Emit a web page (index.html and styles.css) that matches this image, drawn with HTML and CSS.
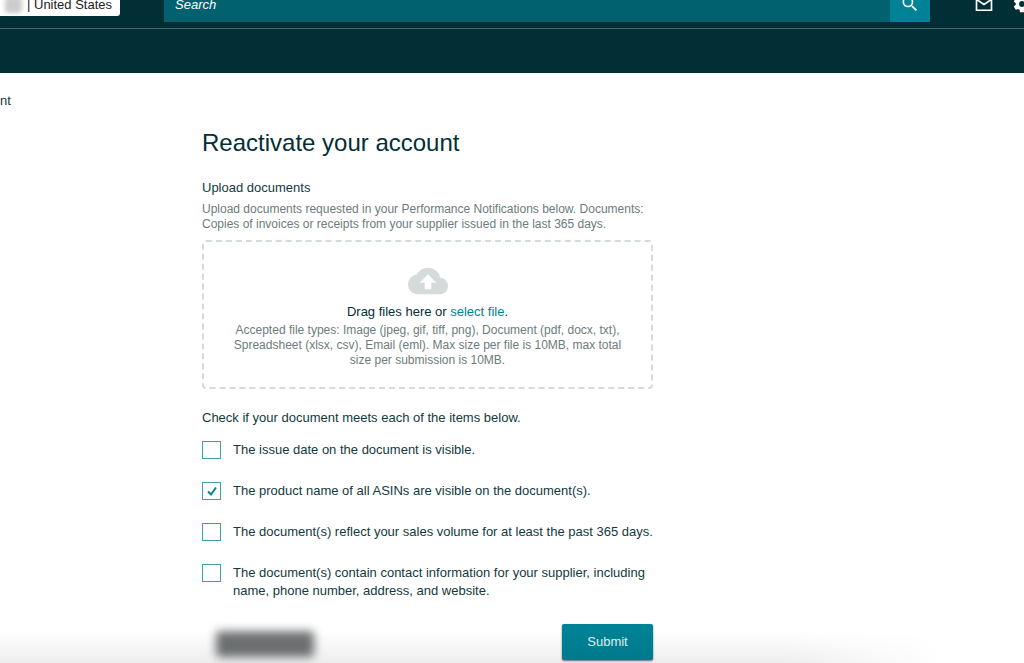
FILE: index.html
```html
<!DOCTYPE html>
<html lang="en">
<head>
<meta charset="utf-8">
<meta name="viewport" content="width=device-width, initial-scale=1">
<title>Reactivate your account</title>
<link rel="stylesheet" href="styles.css">
</head>
<body>
<header class="header">
  <div class="topbar">
    <button class="store" type="button"><span class="store-name"></span><span>| United States</span></button>
    <form class="search" role="search">
      <input class="search-input" type="search" placeholder="Search" aria-label="Search">
      <button class="search-button" type="button" aria-label="Run search">
        <svg width="20" height="20" viewBox="0 0 24 24" fill="currentColor"><path d="M15.5 14h-.79l-.28-.27A6.47 6.47 0 0 0 16 9.500 6.500 6.500 0 1 0 9.500 16c1.610 0 3.090-.59 4.230-1.570l.27.28v.79l5 4.990L20.490 19zm-6 0a4.500 4.500 0 1 1 0-9 4.500 4.500 0 0 1 0 9z"/></svg>
      </button>
    </form>
    <nav class="tools" aria-label="Tools">
      <button class="tool" type="button" aria-label="Messages">
        <svg width="20" height="20" viewBox="0 0 24 24" fill="none" stroke="currentColor" stroke-width="2"><path d="M3 5h18v14.500H3zM3 6.500l9 6 9-6"/></svg>
      </button>
      <button class="tool" type="button" aria-label="Settings">
        <svg width="20" height="20" viewBox="0 0 24 24" fill="currentColor"><path d="M19.430 12.980c.04-.32.07-.64.07-.98s-.03-.66-.07-.98l2.110-1.650c.19-.15.24-.42.12-.64l-2-3.460c-.12-.22-.39-.3-.61-.22l-2.490 1c-.52-.4-1.080-.73-1.690-.98l-.38-2.650A.49.49 0 0 0 14 2h-4c-.25 0-.46.18-.49.42l-.38 2.650c-.61.25-1.170.59-1.690.98l-2.490-1c-.23-.09-.49 0-.61.22l-2 3.460c-.13.22-.07.49.12.64l2.110 1.650c-.04.32-.07.65-.07.98s.03.66.07.98l-2.110 1.650c-.19.15-.24.42-.12.64l2 3.460c.12.22.39.3.61.22l2.490-1c.52.4 1.080.73 1.690.98l.38 2.650c.03.24.24.42.49.42h4c.25 0 .46-.18.49-.42l.38-2.650c.61-.25 1.170-.59 1.690-.98l2.490 1c.23.09.49 0 .61-.22l2-3.460c.12-.22.07-.49-.12-.64zM12 15.500a3.500 3.500 0 1 1 0-7 3.500 3.500 0 0 1 0 7z"/></svg>
      </button>
    </nav>
  </div>
  <div class="menubar"></div>
</header>
<div class="crumb">nt</div>
<main class="main">
  <h1 class="title">Reactivate your account</h1>
  <h2 class="subtitle">Upload documents</h2>
  <p class="hint">Upload documents requested in your Performance Notifications below. Documents: Copies of invoices or receipts from your supplier issued in the last 365 days.</p>
  <section class="dropzone">
    <svg class="cloud" width="40" height="40" viewBox="0 0 24 24" fill="currentColor"><path d="M19.350 10.040A7.490 7.490 0 0 0 12 4C9.110 4 6.600 5.640 5.350 8.040A5.994 5.994 0 0 0 0 14c0 3.310 2.690 6 6 6h13c2.760 0 5-2.240 5-5 0-2.640-2.050-4.780-4.650-4.960zM14 13v4h-4v-4H7l5-5 5 5z"/></svg>
    <p class="drop-text">Drag files here or <a class="link" href="#">select file</a>.</p>
    <p class="drop-hint">Accepted file types: Image (jpeg, gif, tiff, png), Document (pdf, docx, txt), Spreadsheet (xlsx, csv), Email (eml). Max size per file is 10MB, max total size per submission is 10MB.</p>
  </section>
  <form>
    <fieldset class="checks">
      <legend class="legend">Check if your document meets each of the items below.</legend>
      <label class="check"><input class="box" type="checkbox"><span>The issue date on the document is visible.</span></label>
      <label class="check"><input class="box" type="checkbox" checked><span>The product name of all ASINs are visible on the document(s).</span></label>
      <label class="check"><input class="box" type="checkbox"><span>The document(s) reflect your sales volume for at least the past 365 days.</span></label>
      <label class="check"><input class="box" type="checkbox"><span>The document(s) contain contact information for your supplier, including name, phone number, address, and website.</span></label>
    </fieldset>
    <div class="actions">
      <span class="obscured"></span>
      <button class="submit" type="button">Submit</button>
    </div>
  </form>
</main>
<div class="shade"></div>
</body>
</html>
```
FILE: styles.css
```css
* { box-sizing: border-box; }

body {
  margin: 0;
  min-height: 100vh;
  overflow: hidden;
  background: #fff;
  color: #123a40;
  font: 13px/18px "Liberation Sans", Arial, sans-serif;
}

button, input { font: inherit; }
h1, h2, p, fieldset { margin: 0; padding: 0; border: 0; font-weight: 400; }

.header { background: #022f36; color: #fff; }

.topbar {
  display: flex;
  align-items: flex-end;
  height: 29px;
  padding-bottom: 6px;
  border-bottom: 1px solid #4a6365;
}

.store {
  display: flex;
  align-items: center;
  gap: 5px;
  width: 120px;
  height: 22px;
  margin-bottom: 6px;
  padding: 0 0 0 5px;
  border: 0;
  border-radius: 0 3px 3px 0;
  background: #fff;
  color: #222;
  white-space: nowrap;
}

.store-name {
  width: 17px;
  height: 16px;
  border-radius: 4px;
  background: #ccc;
  filter: blur(2px);
}

.search {
  display: flex;
  flex: 1;
  height: 36px;
  margin-left: 44px;
}

.search-input {
  flex: 1;
  min-width: 0;
  padding: 2px 11px 0;
  border: 0;
  border-radius: 0;
  background: #01616e;
  color: #fff;
  font-style: italic;
}

.search-input::placeholder { color: #fff; opacity: 1; }

.search-button {
  display: grid;
  place-items: center;
  width: 40px;
  padding: 0;
  border: 0;
  background: #008296;
  color: #fff;
}

.tools {
  display: flex;
  justify-content: space-between;
  width: 58px;
  margin: 0 -8px 8px 44px;
}

.tool {
  display: grid;
  padding: 0;
  border: 0;
  background: none;
  color: #fff;
}

.menubar { height: 44px; }

.crumb { padding-top: 19px; }

.main {
  max-width: 451px;
  margin-left: 202px;
  padding-top: 18px;
}

.title {
  color: #022f36;
  font-size: 24px;
  line-height: 30px;
}

.subtitle {
  margin-top: 21px;
  font-size: 13px;
}

.hint { margin-top: 5px; }

.hint, .drop-hint {
  color: #6c7c7c;
  font-size: 12px;
  line-height: 15px;
}

.dropzone {
  margin-top: 8px;
  padding: 19px 26px;
  border: 2px dashed #d5dbdb;
  border-radius: 4px;
  text-align: center;
}

.cloud { display: block; margin: 0 auto 2px; color: #d5dbdb; }

.drop-text { margin-bottom: 2px; color: #022f36; }

.link { color: #008296; text-decoration: none; }

.checks { display: grid; gap: 23px; min-width: 0; margin-top: 20px; }

.legend { margin-bottom: 14px; padding: 0; }

.check { display: flex; align-items: flex-start; gap: 12px; }

.box {
  flex: none;
  appearance: none;
  width: 19px;
  height: 18px;
  margin: 0;
  border: 1px solid #3d9fae;
  background: #fff;
}

.box:checked {
  background: #fff url("data:image/svg+xml,%3Csvg xmlns='http://www.w3.org/2000/svg' viewBox='0 0 16 16'%3E%3Cpath d='M4 8.500l3 3L12 4.500' fill='none' stroke='%23008296' stroke-width='2'/%3E%3C/svg%3E") center / 16px no-repeat;
}

.actions {
  display: flex;
  justify-content: space-between;
  align-items: center;
  margin-top: 24px;
  padding-left: 14px;
}

.obscured {
  width: 98px;
  height: 26px;
  margin-top: 4px;
  border-radius: 4px;
  background: #707375;
  filter: blur(5px);
}

.submit {
  width: 91px;
  height: 36px;
  border: 0;
  border-radius: 2px;
  background: #008296;
  color: #e6f3f5;
  box-shadow: 0 1px 2px #5b7a7e;
}

.shade {
  position: fixed;
  right: 0;
  bottom: 0;
  left: 0;
  height: 32px;
  background: linear-gradient(rgb(0 0 0 / 0%), rgb(0 0 0 / 7%));
  mask-image: linear-gradient(to right, #000 76%, transparent 92%);
  pointer-events: none;
}
```
